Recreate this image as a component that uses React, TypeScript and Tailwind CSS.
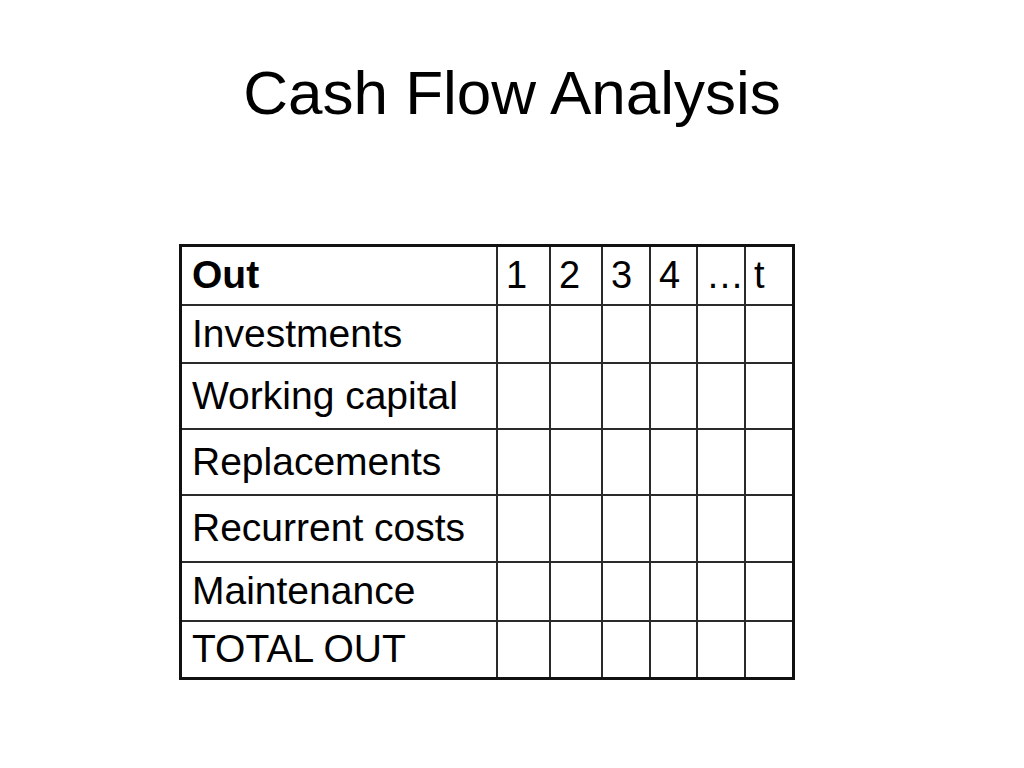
const rows: { label: string; h: string; bold?: boolean }[] = [
  { label: "Out", h: "h-[57px]", bold: true },
  { label: "Investments", h: "h-[56px]" },
  { label: "Working capital", h: "h-[64px]" },
  { label: "Replacements", h: "h-[64px]" },
  { label: "Recurrent costs", h: "h-[65px]" },
  { label: "Maintenance", h: "h-[57px]" },
  { label: "TOTAL OUT", h: "h-[55px]" },
];

const periods = ["1", "2", "3", "4", "\u2026", "t"];

export default function App() {
  return (
    <div className="w-[1024px] h-[768px] bg-white text-black font-['Liberation_Sans',Arial,sans-serif] overflow-hidden">
      <h1 className="pt-[62px] text-center text-[62px] leading-none font-normal">Cash Flow Analysis</h1>

      <div className="ml-[179px] mt-[120px] w-[616px] border-[3px] border-[#111]">
        <div className="grid grid-cols-[314px_51px_50px_46px_45px_46px_46px] gap-[2px] bg-[#2a2a2a]">
          {rows.map((r, i) => (
            <div key={r.label} className="contents">
              <div className={`${r.h} bg-white flex items-center pl-[10px] text-[39px] whitespace-nowrap ${r.bold ? "font-bold" : ""}`}>
                {r.label}
              </div>
              {periods.map((p) => (
                <div key={p} className={`${r.h} bg-white flex items-center pl-[8px] text-[38px] whitespace-nowrap overflow-visible relative`}>
                  {i === 0 ? <span className="relative z-10">{p}</span> : null}
                </div>
              ))}
            </div>
          ))}
        </div>
      </div>
    </div>
  );
}
